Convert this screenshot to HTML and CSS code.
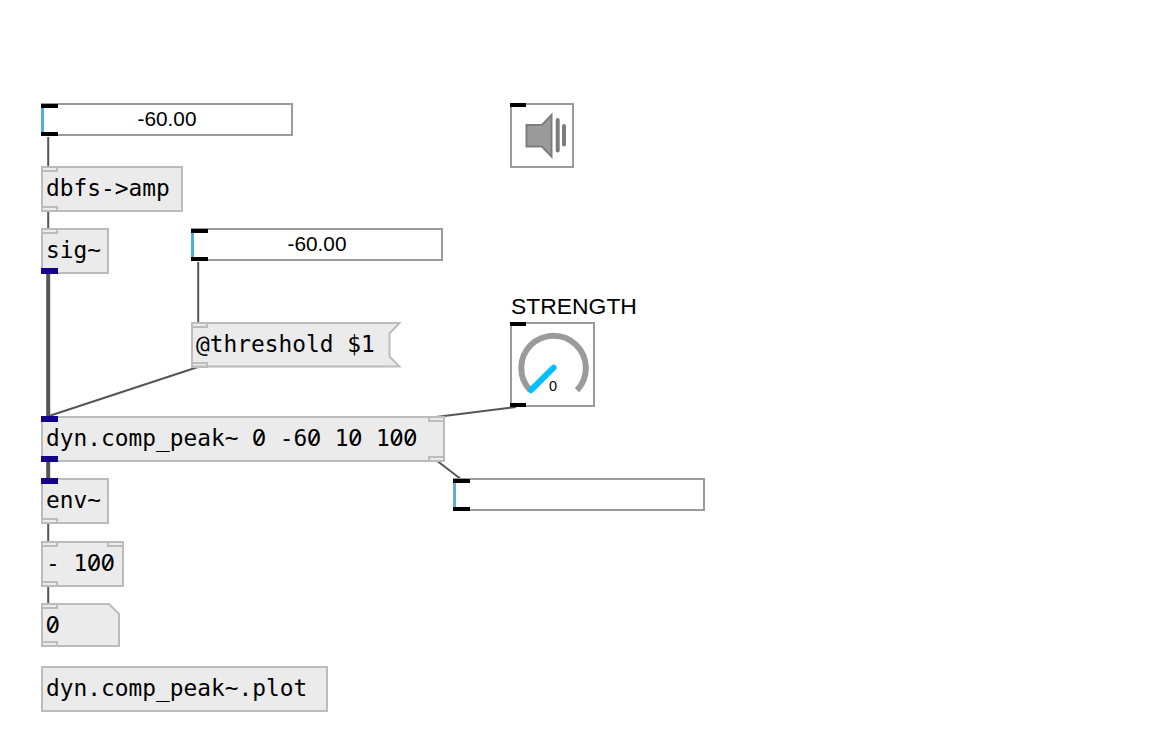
FILE: index.html
```html
<!DOCTYPE html>
<html lang="en">
<head>
<meta charset="utf-8">
<title>dyn.comp_peak~</title>
<link rel="stylesheet" href="styles.css">
</head>
<body>
<main class="patch">
  <svg class="wires" width="1161" height="744" viewBox="0 0 1161 744">
    <path class="wire" d="M48.2 137V167M48.2 211V229M198.2 262V323M198 367L49 416M516 407L436 417M436 460L462 480M48.2 523V542M48.2 586V604"/>
    <path class="signal" d="M48.2 272V418M48.2 459V481"/>
  </svg>

  <div class="slider s1"><i class="port in"></i><i class="port out"></i><span class="value">-60.00</span></div>
  <div class="slider s2"><i class="port in"></i><i class="port out"></i><span class="value">-60.00</span></div>
  <div class="slider s3"><i class="port in"></i><i class="port out"></i></div>

  <div class="object dbfs"><i class="let in"></i><i class="let out"></i><span class="text">dbfs-&gt;amp</span></div>
  <div class="object sig"><i class="let in"></i><i class="let out audio"></i><span class="text">sig~</span></div>
  <div class="object comp"><i class="let in audio"></i><i class="let out audio"></i><i class="let in right"></i><i class="let out right"></i><span class="text">dyn.comp_peak~ <b>0</b> -6<b>0</b> 1<b>0</b> 1<b>0</b><b>0</b></span></div>
  <div class="object env"><i class="let in audio"></i><i class="let out"></i><span class="text">env~</span></div>
  <div class="object minus"><i class="let in"></i><i class="let out"></i><i class="let in right"></i><span class="text">- 1<b>0</b><b>0</b></span></div>
  <div class="object plot"><span class="text">dyn.comp_peak~.plot</span></div>

  <div class="shaped message">
    <svg class="outline" width="211" height="46"><path d="M1 1H208.5L198.5 11.5V34.5L208.5 44.5H1Z"/></svg>
    <i class="let in"></i><i class="let out"></i><span class="text">@threshold $1</span>
  </div>
  <div class="shaped number">
    <svg class="outline" width="80" height="44"><path d="M1 1H68L78 11V43H1Z"/></svg>
    <i class="let in"></i><i class="let out"></i><span class="text"><b>0</b></span>
  </div>

  <div class="widget dsp">
    <i class="port in"></i>
    <svg class="art" width="64" height="64">
      <path class="speaker" d="M16.5 22H32L41.5 12V53.5L32 43.5H16.5Z"/>
      <path class="waves" d="M47.7 17V47.5M54 23V41.5"/>
    </svg>
  </div>

  <div class="label">STRENGTH</div>
  <div class="widget knob">
    <i class="port in"></i><i class="port out"></i>
    <svg class="art" width="85" height="85">
      <path class="track" d="M20.4 68.5A32.3 32.3 0 1 1 67 68.2"/>
      <path class="needle" d="M43.6 45.7L21 68.2"/>
    </svg>
    <span class="reading">0</span>
  </div>
</main>
</body>
</html>
```
FILE: styles.css
```css
body { margin: 0; background: #fff; }
.patch { position: relative; width: 1161px; height: 744px; overflow: hidden; color: #000; }
.wires, .art, .outline { position: absolute; left: 0; top: 0; display: block; overflow: visible; }
.wire, .signal { fill: none; stroke: #555; stroke-width: 2; }
.signal { stroke-width: 4; }

.object, .slider, .widget, .shaped { position: absolute; box-sizing: border-box; }
.object { left: 41px; height: 46px; background: #ebebeb; border: 2px solid #bcbcbc; }
.dbfs { top: 166px; width: 142px; }
.sig { top: 228px; width: 68px; }
.comp { top: 416px; width: 404px; }
.env { top: 478px; width: 68px; }
.minus { top: 541px; width: 83px; }
.plot { top: 666px; width: 287px; }
.message { left: 191px; top: 322px; width: 211px; height: 46px; }
.number { left: 41px; top: 603px; width: 80px; height: 44px; }
.outline path { fill: #ebebeb; stroke: #bcbcbc; stroke-width: 2; }

.text {
  position: absolute; left: 3px; top: 6px; white-space: pre;
  font: 22.84px/28px "DejaVu Sans Mono", monospace;
}
.shaped .text { left: 5px; top: 8px; }
.text b { position: relative; display: inline-block; width: 13.75px; font-family: "DejaVu Sans", sans-serif; font-weight: 400; text-indent: -0.4px; }
.text b::after {
  content: ""; position: absolute; left: 5.9px; top: 8px; width: 1.6px; height: 12.5px;
  background: #000; transform: rotate(31deg);
}

.let { position: absolute; box-sizing: border-box; left: -2px; width: 17px; height: 6px; border: 2px solid #bcbcbc; }
.let.in { top: -2px; }
.let.out { bottom: -2px; }
.let.right { left: auto; right: -2px; }
.let.audio { background: #15008a; border-color: #15008a; }
.shaped .let { left: 0; }
.shaped .let.in { top: 0; }
.shaped .let.out { bottom: 0; }

.slider { width: 252px; height: 33px; border: 2px solid #9b9b9b; border-left: 3px solid #4eb2d0; }
.s1 { left: 41px; top: 103px; }
.s2 { left: 191px; top: 228px; }
.s3 { left: 453px; top: 478px; border-left-color: #65b0c8; }
.value { position: absolute; left: 1px; top: 1px; width: 244px; text-align: center; font: 20.8px/25px "Liberation Sans", Arial, sans-serif; }

.port { position: absolute; width: 17px; height: 4px; background: #000; left: -3px; }
.port.in { top: -1px; }
.port.out { bottom: -2px; }
.widget { left: 510px; border: 2px solid #9b9b9b; }
.widget .port { left: -2px; width: 16px; }
.widget .port.in { top: -2px; }
.widget .art { left: -2px; top: -2px; }
.dsp { top: 103px; width: 64px; height: 65px; }
.knob { top: 322px; width: 85px; height: 85px; }
.speaker { fill: #9b9b9b; stroke: #7d7d7d; stroke-width: 2; }
.waves { fill: none; stroke: #7d7d7d; stroke-width: 4; stroke-linecap: round; }
.track { fill: none; stroke: #9b9b9b; stroke-width: 6; }
.needle { fill: none; stroke: #00bfff; stroke-width: 6; stroke-linecap: round; }
.label { position: absolute; left: 511px; top: 292px; font: 22.9px/28px "Liberation Sans", Arial, sans-serif; }
.reading { position: absolute; left: 37px; top: 54px; font: 14.5px/17px "Liberation Sans", Arial, sans-serif; }
```
